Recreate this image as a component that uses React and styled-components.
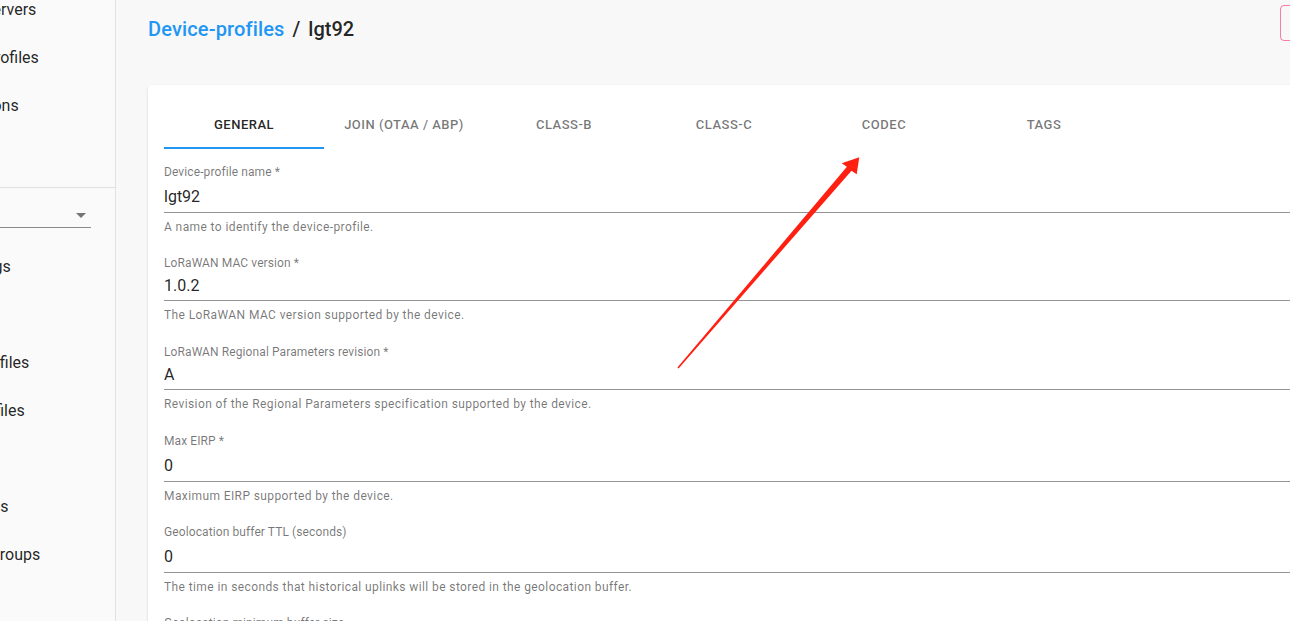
import styled, { createGlobalStyle } from "styled-components";

const GlobalStyle = createGlobalStyle`
  html, body {
    margin: 0;
    padding: 0;
    overflow: hidden;
    background: #f8f8f8;
  }
  body {
    font-family: Roboto, "Helvetica Neue", Arial, sans-serif;
  }
`;

const topMenu = ["Network-servers", "Gateway-profiles", "Organizations", "All users"];
const orgMenu = [
  "Org. settings",
  "Org. users",
  "Service-profiles",
  "Device-profiles",
  "Gateways",
  "Applications",
  "Multicast-groups",
];

const tabs = ["General", "Join (OTAA / ABP)", "Class-B", "Class-C", "Codec", "Tags"];

const fields = [
  {
    label: "Device-profile name *",
    value: "lgt92",
    help: "A name to identify the device-profile.",
  },
  {
    label: "LoRaWAN MAC version *",
    value: "1.0.2",
    help: "The LoRaWAN MAC version supported by the device.",
    select: true,
  },
  {
    label: "LoRaWAN Regional Parameters revision *",
    value: "A",
    help: "Revision of the Regional Parameters specification supported by the device.",
    select: true,
  },
  {
    label: "Max EIRP *",
    value: "0",
    help: "Maximum EIRP supported by the device.",
  },
  {
    label: "Geolocation buffer TTL (seconds)",
    value: "0",
    help: "The time in seconds that historical uplinks will be stored in the geolocation buffer.",
  },
  {
    label: "Geolocation minimum buffer size",
    value: "0",
    help: "The minimum amount of recent uplinks that must be available in the geolocation buffer.",
  },
];

const App = () => {
  return (
    <Viewport>
      <GlobalStyle />
      <Layout>
        <Sidebar>
          <MenuList>
            {topMenu.map((item) => (
              <MenuItem key={item}>{item}</MenuItem>
            ))}
          </MenuList>
          <Divider />
          <OrgSelect>
            <span>Organization</span>
            <Caret />
          </OrgSelect>
          <MenuList>
            {orgMenu.map((item) => (
              <MenuItem key={item}>{item}</MenuItem>
            ))}
          </MenuList>
        </Sidebar>

        <Main>
          <TitleBar>
            <Breadcrumb>
              <a href="#">Device-profiles</a>
              <Slash>/</Slash>
              <span>lgt92</span>
            </Breadcrumb>
            <DeleteButton>Delete</DeleteButton>
          </TitleBar>

          <Card>
            <TabBar>
              {tabs.map((t, i) => (
                <Tab key={t} $active={i === 0}>
                  {t}
                </Tab>
              ))}
            </TabBar>
            <Form>
              {fields.map((f) => (
                <Field key={f.label} $select={f.select}>
                  <Label>{f.label}</Label>
                  <Input $select={f.select}>{f.value}</Input>
                  <Helper>{f.help}</Helper>
                </Field>
              ))}
            </Form>
          </Card>
        </Main>
      </Layout>

      <Annotation viewBox="0 0 1290 621" width="1290" height="621">
        <polygon
          fill="#ff2012"
          points="677.4,367.6 846.9,166.8 841.7,163.3 859.3,157.3 856.7,174.3 851.5,170.8 678.6,368.4"
        />
      </Annotation>
    </Viewport>
  );
};

const Viewport = styled.div`
  position: relative;
  width: 1290px;
  height: 621px;
  overflow: hidden;
`;

const Layout = styled.div`
  display: flex;
  width: 1410px;
  min-height: 621px;
`;

const Sidebar = styled.aside`
  width: 115px;
  flex-shrink: 0;
  background: #fafafa;
  border-right: 1px solid #e2e2e2;
  overflow: hidden;
`;

const MenuList = styled.ul`
  list-style: none;
  margin: 0;
  padding: 0;
  margin-left: -80px;
  width: 195px;
`;

const MenuItem = styled.li`
  height: 48px;
  line-height: 48px;
  font-size: 16px;
  color: rgba(0, 0, 0, 0.87);
  white-space: nowrap;
  margin-top: -14px;
  margin-bottom: 14px;
`;

const Divider = styled.div`
  height: 1px;
  background: #e0e0e0;
  margin-top: -5px;
`;

const OrgSelect = styled.div`
  display: flex;
  align-items: center;
  justify-content: space-between;
  width: 91px;
  height: 24px;
  margin-top: 15px;
  margin-bottom: 29px;
  border-bottom: 1px solid #8a8a8a;
  font-size: 16px;
  color: transparent;
  span {
    overflow: hidden;
    width: 0;
  }
`;

const Caret = styled.i`
  width: 0;
  height: 0;
  margin-right: 5px;
  border-left: 5px solid transparent;
  border-right: 5px solid transparent;
  border-top: 5px solid #757575;
`;

const Main = styled.main`
  flex: 1;
  padding: 0 32px;
  background: #f8f8f8;
`;

const TitleBar = styled.div`
  display: flex;
  justify-content: space-between;
  align-items: flex-start;
  height: 85px;
`;

const Breadcrumb = styled.h1`
  margin: 16px 0 0;
  font-size: 20px;
  font-weight: 500;
  line-height: 26px;
  color: rgba(0, 0, 0, 0.87);
  display: flex;
  align-items: center;
  a {
    color: #2196f3;
    text-decoration: none;
    letter-spacing: 0.15px;
  }
`;

const Slash = styled.span`
  margin: 0 8px;
`;

const DeleteButton = styled.button`
  margin-top: 5px;
  width: 98px;
  height: 36px;
  border: 1px solid rgba(245, 0, 87, 0.5);
  border-radius: 4px;
  background: transparent;
  color: #f50057;
  font-family: Roboto, Arial, sans-serif;
  font-size: 14px;
  font-weight: 500;
  text-transform: uppercase;
`;

const Card = styled.section`
  background: #fff;
  border-radius: 4px;
  padding: 16px;
  box-shadow: 0 1px 3px rgba(0, 0, 0, 0.12), 0 1px 1px rgba(0, 0, 0, 0.08);
  min-height: 600px;
`;

const TabBar = styled.div`
  display: flex;
  height: 48px;
`;

const Tab = styled.div`
  width: 160px;
  display: flex;
  align-items: center;
  justify-content: center;
  padding-top: 1px;
  font-size: 13px;
  font-weight: 500;
  letter-spacing: 0.5px;
  text-transform: uppercase;
  color: ${(p) => (p.$active ? "rgba(0, 0, 0, 0.87)" : "rgba(0, 0, 0, 0.54)")};
  border-bottom: 2px solid ${(p) => (p.$active ? "#2196f3" : "transparent")};
  box-sizing: border-box;
`;

const Form = styled.div`
  padding-top: 15px;
`;

const Field = styled.div`
  margin-bottom: ${(p) => (p.$select ? "21px" : "20px")};
`;

const Label = styled.div`
  font-size: 12px;
  line-height: 16px;
  letter-spacing: 0.1px;
  color: rgba(0, 0, 0, 0.54);
`;

const Input = styled.div`
  height: ${(p) => (p.$select ? "29px" : "32px")};
  line-height: ${(p) => (p.$select ? "30px" : "34px")};
  font-size: 16px;
  color: rgba(0, 0, 0, 0.87);
  border-bottom: 1px solid #949494;
`;

const Helper = styled.div`
  margin-top: 6px;
  font-size: 12px;
  line-height: 16px;
  letter-spacing: 0.4px;
  color: rgba(0, 0, 0, 0.54);
`;

const Annotation = styled.svg`
  position: absolute;
  top: 0;
  left: 0;
  pointer-events: none;
`;

export default App;
